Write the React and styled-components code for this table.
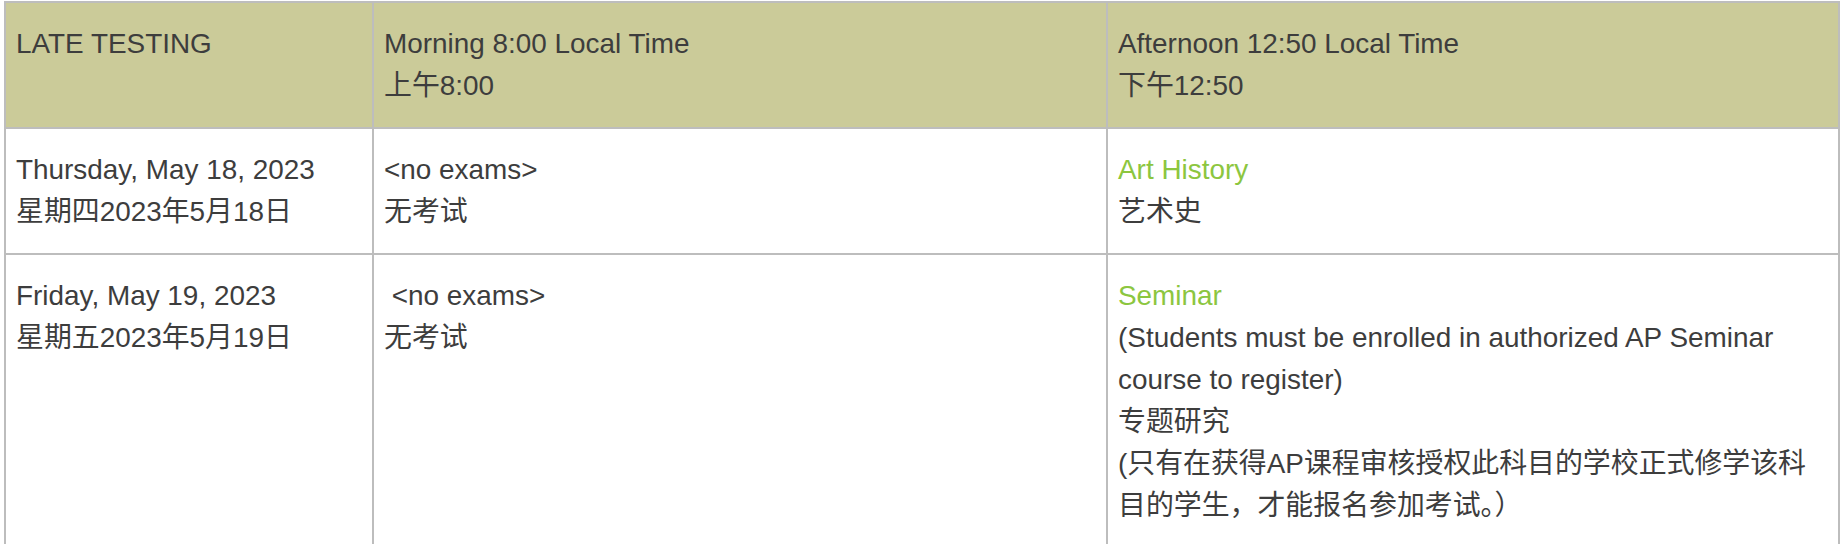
import styled, { createGlobalStyle } from 'styled-components';

const GlobalStyle = createGlobalStyle`
  html, body {
    margin: 0;
    padding: 0;
    overflow: hidden;
    background: #ffffff;
  }
`;

const Table = styled.div`
  box-sizing: border-box;
  width: 1836px;
  margin: 1px 0 0 4px;
  padding: 2px;
  display: grid;
  grid-template-columns: 366px 732px 730px;
  gap: 2px;
  background-color: #bdbdbd;
`;

const Cell = styled.div`
  padding: 20px 10px;
  background-color: ${(p) => (p.$head ? '#cbcb99' : '#ffffff')};
  color: #3d3d3d;
  font-family: "Liberation Sans", Arial, "Noto Sans CJK SC", sans-serif;
  font-size: 27.9px;
  line-height: 42px;
`;

const Line = styled.div`
  margin: 0;
`;

const Text = styled.span`
  line-height: 1;
  color: ${(p) => (p.$subject ? '#8cc63f' : 'inherit')};
`;

const rows = [
  {
    head: true,
    cells: [
      ['LATE TESTING'],
      ['Morning 8:00 Local Time', '上午8:00'],
      ['Afternoon 12:50 Local Time', '下午12:50'],
    ],
  },
  {
    cells: [
      ['Thursday, May 18, 2023', '星期四2023年5月18日'],
      ['<no exams>', '无考试'],
      [{ subject: 'Art History' }, '艺术史'],
    ],
  },
  {
    cells: [
      ['Friday, May 19, 2023', '星期五2023年5月19日'],
      ['\u00a0<no exams>', '无考试'],
      [
        { subject: 'Seminar' },
        '(Students must be enrolled in authorized AP Seminar course to register)',
        '专题研究',
        '(只有在获得AP课程审核授权此科目的学校正式修学该科目的学生，才能报名参加考试。）',
      ],
    ],
  },
];

export default function App() {
  return (
    <>
      <GlobalStyle />
      <Table>
        {rows.map((row, r) =>
          row.cells.map((lines, c) => (
            <Cell key={`${r}-${c}`} $head={row.head}>
              {lines.map((line, i) => (
                <Line key={i}>
                  {typeof line === 'string' ? (
                    <Text>{line}</Text>
                  ) : (
                    <Text $subject>{line.subject}</Text>
                  )}
                </Line>
              ))}
            </Cell>
          ))
        )}
      </Table>
    </>
  );
}
